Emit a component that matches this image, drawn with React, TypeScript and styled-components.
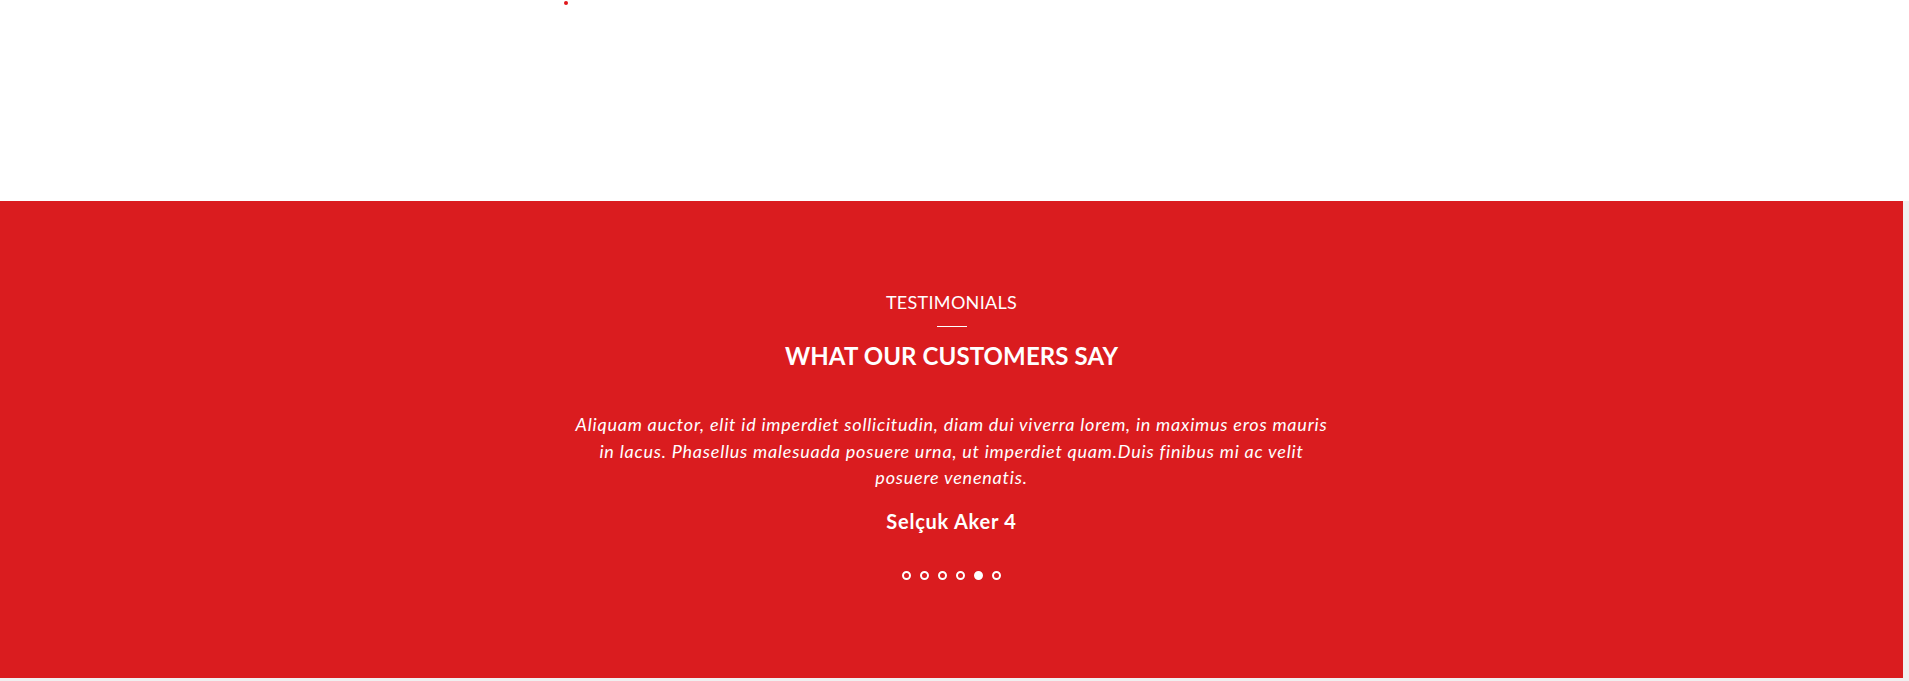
import React from "react";
import styled, { createGlobalStyle } from "styled-components";

const GlobalStyle = createGlobalStyle`
  html, body {
    margin: 0;
    padding: 0;
    background: #f0f0f0;
  }
  body {
    font-family: Lato, "Open Sans", Arial, sans-serif;
  }
`;

const Page = styled.div`
  display: flex;
  flex-direction: column;
  width: 100%;
`;

const TopArea = styled.div`
  height: 201px;
  background: #ffffff;
  padding: 1px 0 0 564px;
  box-sizing: border-box;
`;

const Marker = styled.span`
  display: block;
  width: 4px;
  height: 4px;
  border-radius: 50%;
  background: #e0161b;
`;

const Testimonials = styled.section`
  width: 1903px;
  height: 477px;
  box-sizing: border-box;
  background: #da1c1f;
  padding-top: 90px;
  display: flex;
  flex-direction: column;
  align-items: center;
  color: #ffffff;
  text-align: center;
`;

const Eyebrow = styled.div`
  font-size: 18px;
  line-height: 22px;
  font-weight: 400;
  letter-spacing: 0.3px;
  text-transform: uppercase;
`;

const Divider = styled.span`
  display: block;
  width: 30px;
  height: 1px;
  background: #ffffff;
  margin-top: 13px;
`;

const Heading = styled.h2`
  margin: 14px 0 0;
  font-size: 24px;
  line-height: 30px;
  font-weight: 700;
  letter-spacing: 0.1px;
  text-transform: uppercase;
`;

const Quote = styled.p`
  margin: 40px 0 0;
  font-size: 18px;
  line-height: 26.7px;
  font-style: italic;
  font-weight: 400;
  letter-spacing: 0.78px;
`;

const Author = styled.div`
  margin-top: 18px;
  font-size: 20px;
  line-height: 24px;
  font-weight: 700;
  letter-spacing: 0.75px;
`;

const Dots = styled.div`
  display: flex;
  gap: 9px;
  margin-top: 38px;
`;

const Dot = styled.button<{ $active?: boolean }>`
  width: 9px;
  height: 9px;
  padding: 0;
  box-sizing: border-box;
  border: 2px solid #ffffff;
  border-radius: 50%;
  background: ${(p) => (p.$active ? "#ffffff" : "transparent")};
  cursor: pointer;
`;

export default function App() {
  const active = 4;
  return (
    <Page>
      <GlobalStyle />
      <TopArea>
        <Marker />
      </TopArea>
      <Testimonials>
        <Eyebrow>Testimonials</Eyebrow>
        <Divider />
        <Heading>What our customers say</Heading>
        <Quote>
          Aliquam auctor, elit id imperdiet sollicitudin, diam dui viverra lorem, in maximus eros mauris
          <br />
          in lacus. Phasellus malesuada posuere urna, ut imperdiet quam.Duis finibus mi ac velit
          <br />
          posuere venenatis.
        </Quote>
        <Author>Selçuk Aker 4</Author>
        <Dots>
          {[0, 1, 2, 3, 4, 5].map((i) => (
            <Dot key={i} $active={i === active} aria-label={`Slide ${i + 1}`} />
          ))}
        </Dots>
      </Testimonials>
    </Page>
  );
}
